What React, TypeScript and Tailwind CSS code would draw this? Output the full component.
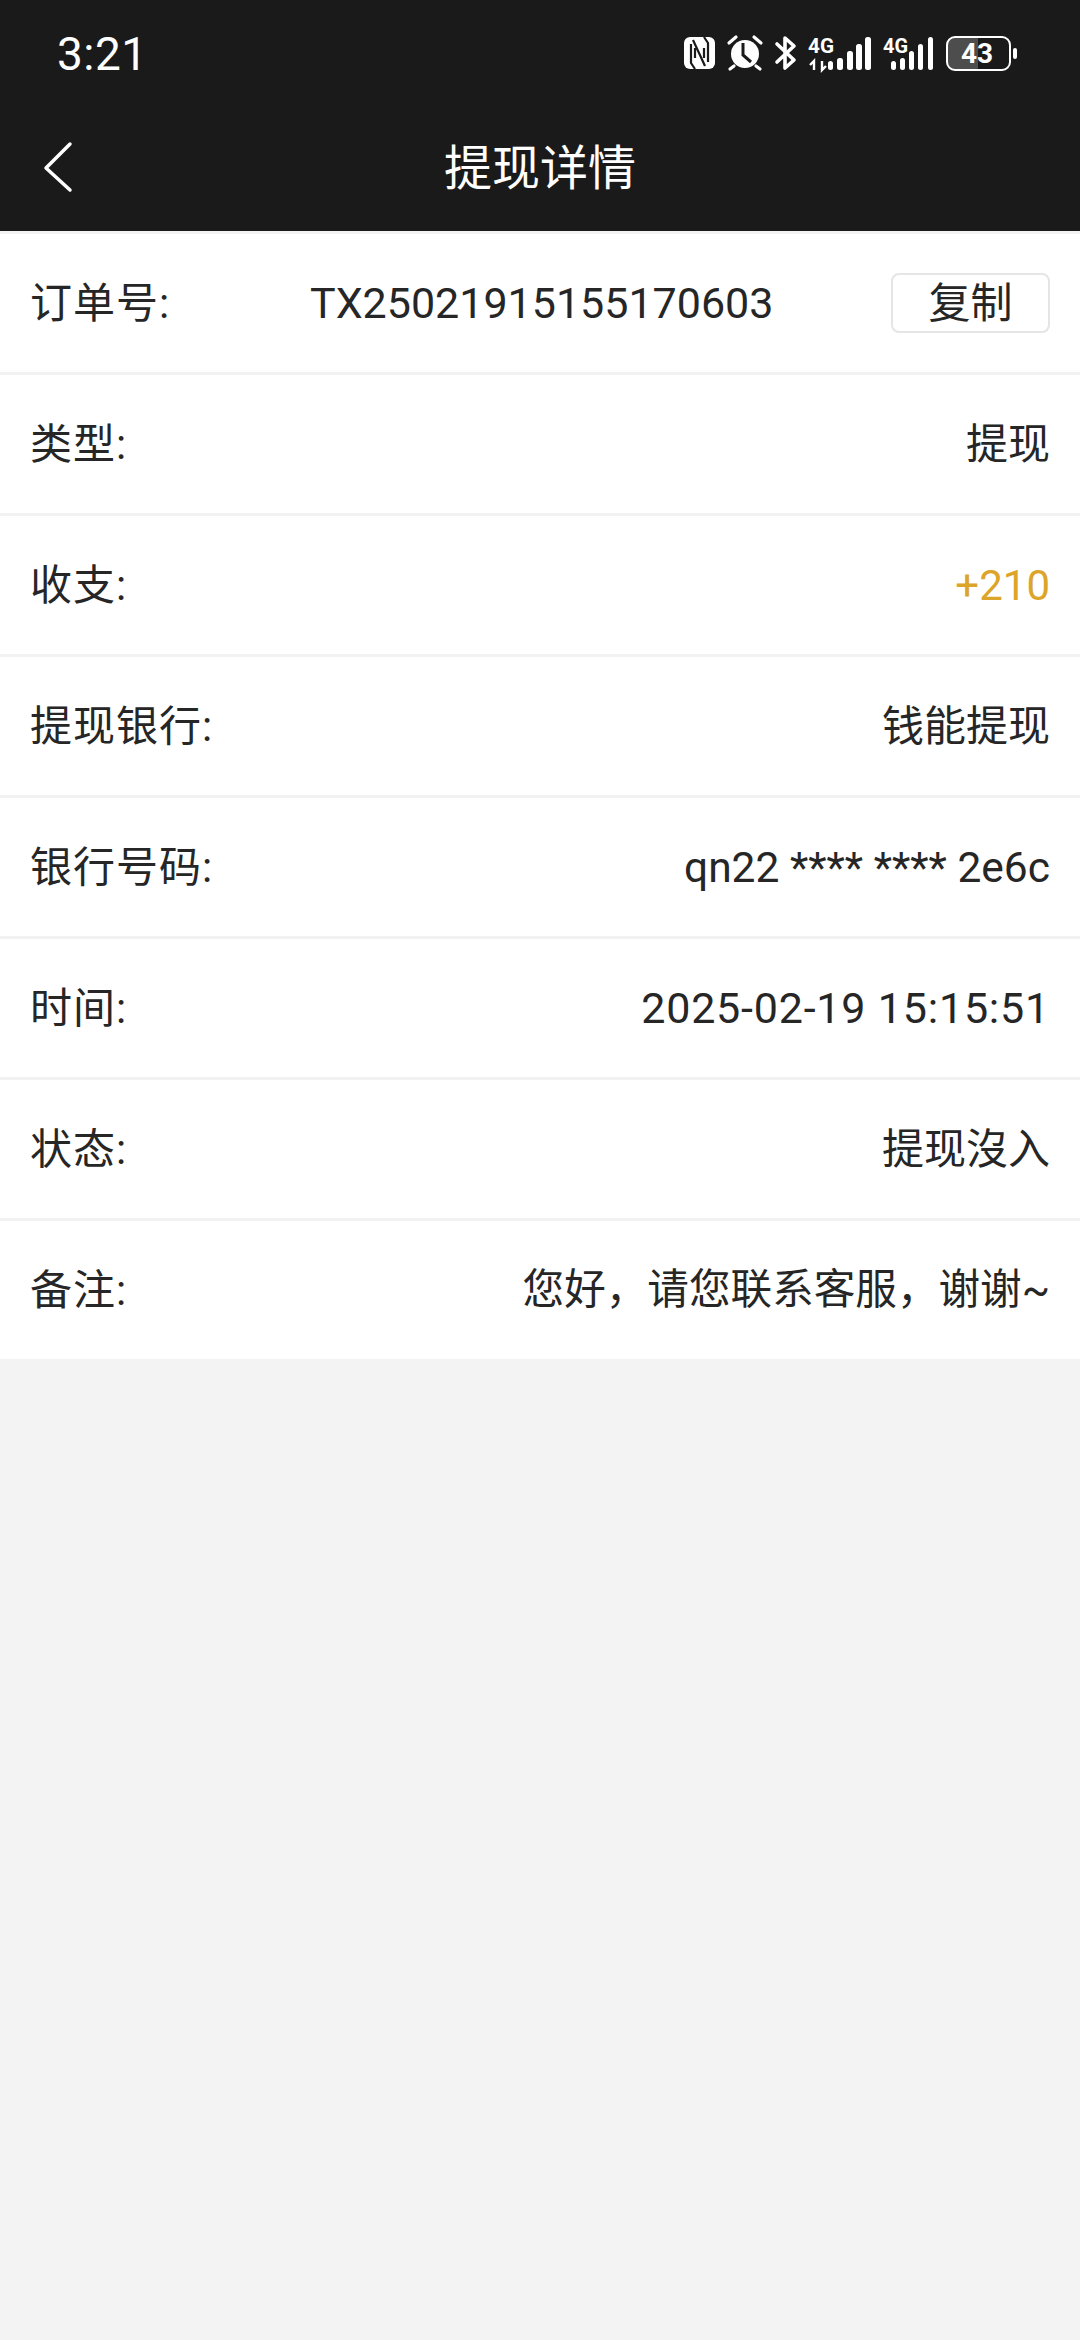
const font = { fontFamily: '"Roboto","Noto Sans CJK SC",sans-serif' };

function StatusIcons() {
  return (
    <svg width="340" height="44" viewBox="0 0 340 44" fill="white" className="block">
      {/* NFC */}
      <rect x="4" y="5" width="31" height="32" rx="6" />
      <path d="M11 12v19l4 6M28 30V11l-4-6M13 8l12 26M15 16v10M24 26V16" stroke="#1a1a1a" strokeWidth="2.2" fill="none" />
      {/* Alarm */}
      <circle cx="65" cy="22" r="14" />
      <path d="M63 11v12l8 7" stroke="#1a1a1a" strokeWidth="3" fill="none" />
      <path d="M49 11l7-6M81 11l-7-6M54 34l-4 3M76 34l4 3" stroke="white" strokeWidth="3.2" fill="none" strokeLinecap="round" />
      {/* Bluetooth */}
      <path d="M97 12l17 16-9 8V6l9 8-17 16" stroke="white" strokeWidth="3.6" fill="none" strokeLinejoin="round" strokeLinecap="round" />
      {/* signal 1 */}
      <text x="128" y="21" fontSize="21" fontWeight="700" fontFamily="Roboto" fill="white" textLength="26" lengthAdjust="spacingAndGlyphs">4G</text>
      <path d="M134 38V29l-4 4M142 29v9l4-4" stroke="white" strokeWidth="2.4" fill="none" />
      <rect x="148" y="29" width="5" height="9" rx="2.5" />
      <rect x="157" y="26" width="6" height="12" rx="2.5" />
      <rect x="167" y="19" width="6" height="19" rx="2.5" />
      <rect x="176" y="12" width="6" height="26" rx="2.5" />
      <rect x="185" y="5" width="6" height="33" rx="2.5" />
      {/* signal 2 */}
      <text x="203" y="21" fontSize="21" fontWeight="700" fontFamily="Roboto" fill="white" textLength="25" lengthAdjust="spacingAndGlyphs">4G</text>
      <rect x="211" y="29" width="5" height="9" rx="2.5" />
      <rect x="220" y="26" width="5" height="12" rx="2.5" />
      <rect x="229" y="19" width="5" height="19" rx="2.5" />
      <rect x="238" y="12" width="5" height="26" rx="2.5" />
      <rect x="248" y="5" width="5" height="33" rx="2.5" />
      {/* battery */}
      <path d="M274 6h24v32h-24a7 7 0 0 1-7-7V13a7 7 0 0 1 7-7z" fill="#4d4d4d" />
      <rect x="267" y="5" width="63" height="33" rx="8" fill="none" stroke="white" strokeWidth="2" />
      <rect x="333" y="16" width="4" height="11" rx="2" />
      <text x="297" y="31" fontSize="28" fontWeight="700" fontFamily="Roboto" fill="white" textAnchor="middle">43</text>
    </svg>
  );
}

function Row({ label, value, valueClass, last }: { label: string; value: string; valueClass?: string; last?: boolean }) {
  return (
    <div className={`flex items-center justify-between bg-white px-[30px] pt-[1px] text-[42px] text-[#262626] ${last ? 'h-[138px]' : 'h-[141px] border-b-[3px] border-[#f2f2f2]'}`}>
      <span className="tracking-[1px]">{label}</span>
      <span className={valueClass}>{value}</span>
    </div>
  );
}

export default function App() {
  return (
    <div style={font} className="flex min-h-[2340px] w-[1080px] flex-col bg-[#f3f3f3]">
      <header className="h-[231px] shrink-0 bg-[#1a1a1a] text-white">
        <div className="flex h-[108px] items-center justify-between pl-[57px] pr-[60px]">
          <span className="text-[46px] leading-none tracking-[0.5px]">3:21</span>
          <StatusIcons />
        </div>
        <div className="relative flex h-[123px] items-center justify-center">
          <svg className="absolute left-[42px] top-[33px]" width="32" height="52" viewBox="0 0 32 52" fill="none">
            <path d="M28 3L4 27l24 22" stroke="white" strokeWidth="3.5" strokeLinecap="round" strokeLinejoin="round" />
          </svg>
          <h1 className="-mt-[2px] text-[48px] font-normal leading-none">提现详情</h1>
        </div>
      </header>
      <main className="mt-[3px]">
        <div className="flex h-[141px] items-center border-b-[3px] border-[#f2f2f2] bg-white px-[30px] pt-[1px] text-[42px] text-[#262626]">
          <span className="w-[280px] tracking-[1px]">订单号:</span>
          <span className="flex-1 text-[43px]">TX25021915155170603</span>
          <button className="-mt-[1px] flex h-[60px] w-[159px] items-center justify-center rounded-[8px] border-2 border-[#e5e5e5] bg-white text-[42px] text-[#262626]">复制</button>
        </div>
        <Row label="类型:" value="提现" />
        <Row label="收支:" value="+210" valueClass="text-[42px] text-[#dca52a]" />
        <Row label="提现银行:" value="钱能提现" />
        <Row label="银行号码:" value="qn22 **** **** 2e6c" valueClass="text-[42.5px]" />
        <Row label="时间:" value="2025-02-19 15:15:51" valueClass="text-[43px] tracking-[0.8px]" />
        <Row label="状态:" value={"提现\u6C92入"} />
        <Row label="备注:" value={"您好\uFF0C请您联系客服\uFF0C谢谢~"} valueClass="text-[41.6px]" last />
      </main>
    </div>
  );
}
